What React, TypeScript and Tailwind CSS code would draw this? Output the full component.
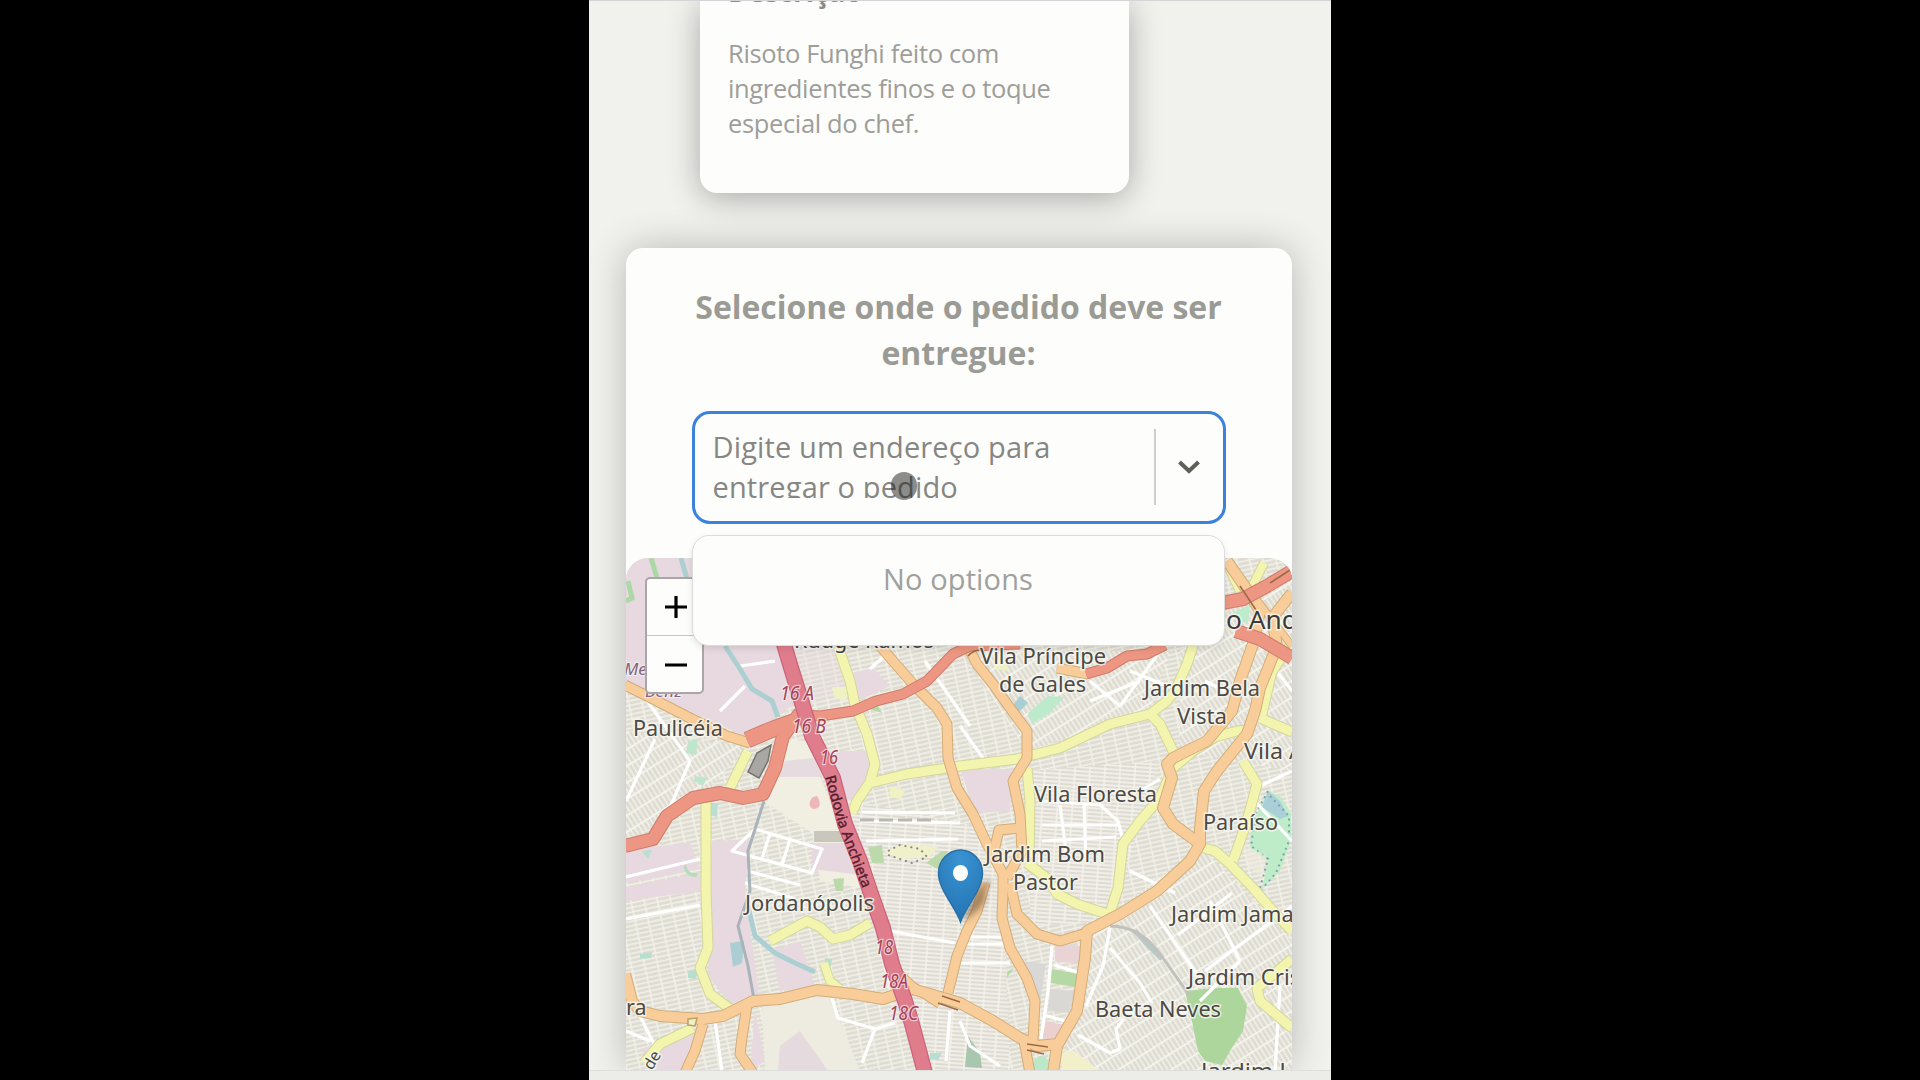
import React from "react";

type Road = { d: string; w?: number };

const yellowRoads: Road[] = [
  { d: "M838 645L850 680L855 704L867 733L875 763L870 781L857 800L852 812" },
  { d: "M870 782L907 773L960 765L1017 758L1060 747L1110 723L1150 713L1160 723L1173 750" },
  { d: "M1150 713L1167 700L1175 690L1187 663L1193 645" },
  { d: "M1250 729L1237 730L1215 736L1193 750L1173 767L1160 797L1140 820L1123 843L1118 887L1110 912" },
  { d: "M1027 862L1047 877L1057 893L1077 903L1107 913" },
  { d: "M1027 767L1030 800L1029 855" },
  { d: "M1260 717L1292 731" },
  { d: "M1243 760L1257 783L1247 820L1233 860" },
  { d: "M1200 846L1215 850L1230 863L1253 887L1273 910L1292 930" },
  { d: "M1292 958L1257 987L1260 1000L1292 1027" },
  { d: "M748 750L730 787" },
  { d: "M706 800L706 890L708 947L700 967L710 993L733 1010" },
  { d: "M770 940L790 929L807 920L820 926L833 938L850 934L870 922" },
  { d: "M644 1062L660 1043L693 1027" },
  { d: "M824 962L830 980L840 988", w: 8 },
  { d: "M1227 563L1240 590M1264 562L1250 590L1234 600", w: 8 },
  { d: "M1292 640L1272 672L1262 715", w: 8 },
];

const orangeRoads: Road[] = [
  { d: "M625 684L653 698L690 717L727 735L750 742" },
  { d: "M880 645L913 683L937 707L947 723L948 757L957 787L973 813L987 843L1003 873L1003 890L1002 917L1010 947L1027 977L1035 1000L1033 1040" },
  { d: "M968 646L977 663L993 683L1010 707L1027 730L1027 757L1013 780L1020 813L1022 850L1007 877" },
  { d: "M1020 827L999 829L994 850" },
  { d: "M1010 882L1017 913L1037 933L1060 940L1087 932" },
  { d: "M985 882L977 910L967 930L957 955L948 992" },
  { d: "M1227 560L1243 583L1260 610L1253 643L1240 680L1232 710L1207 740L1173 757L1167 763L1172 777L1163 807L1173 823L1200 843L1190 860L1157 890L1120 913L1087 930L1085 957L1077 1010L1057 1045L1053 1072", w: 10 },
  { d: "M1292 592L1272 617L1277 645L1260 687L1255 710L1247 733L1217 770L1204 790L1200 827L1200 843", w: 10 },
  { d: "M1245 583L1292 645" , w: 6 },
  { d: "M625 973L632 1000L640 1010L660 1015L703 1018L723 1015L753 1000L780 998L817 989L853 993L883 998L912 988L930 993L960 1002L993 1020L1020 1037L1037 1045L1058 1043", w: 10 },
  { d: "M898 972L912 985L940 1003", w: 8 },
  { d: "M747 1004L742 1037L740 1053L753 1072" },
  { d: "M703 1023L695 1050L685 1072" },
  { d: "M1024 1040L1030 1072" },
  { d: "M1057 667L1088 673" },
];

const redRoads: Road[] = [
  { d: "M625 845L653 838L667 815L693 797L720 792L743 797L763 793L775 767L783 735L800 712", w: 12 },
  { d: "M747 739L773 728L796 720", w: 15 },
  { d: "M805 714L820 715L853 710L876 700L903 693L927 680L953 653L970 645L1020 643", w: 9 },
  { d: "M1086 673L1107 667L1127 655L1147 653L1165 644", w: 9 },
  { d: "M1222 602L1243 598L1267 585L1292 570", w: 12 },
  { d: "M1236 630L1260 638L1292 657", w: 12 },
];

const motorway =
  "M783 640L792 670L802 702L812 735L833 777L845 823L860 860L870 890L883 927L892 963L905 1000L912 1023L925 1072";

const streets = [
  "M626 800L655 738M640 690L690 760L660 830M626 876L700 858M626 918L700 904",
  "M755 828L822 848L812 872L732 850L755 828M770 832L762 858M790 838L782 864M747 870L800 884M745 882L795 898",
  "M860 820L960 822M862 811L955 812M866 840L958 838M890 930L955 942M890 936L890 985",
  "M1042 800L1100 804L1118 820L1126 850M1060 804L1066 850M1084 802L1086 860M1042 824L1118 824M1042 840L1116 836",
  "M1130 870L1175 892M1140 790L1160 778M1150 905L1198 975M1178 934L1232 892M1205 970L1292 905",
  "M1110 927L1103 965L1086 1005M1110 947L1140 982L1152 1002M1078 1034L1110 1052L1120 1048L1116 1028L1124 1018",
  "M1052 945L1048 990L1041 1038M1054 964L1080 972M1044 1014L1072 1022",
  "M832 997L838 1017L875 1028L895 1022M875 1028L862 1062M715 1020L722 1070M950 1010L946 1060M640 1015L655 1045",
  "M960 725L985 760M925 660L970 725M890 650L870 668M1090 680L1120 705L1160 650M1130 670L1180 690",
  "M1260 785L1292 770M1250 795L1292 840M1270 662L1292 690M1205 680L1225 690M1090 700L1140 680",
  "M960 1020L970 1045L1000 1065M1280 985L1275 1070M720 710L745 685M740 665L775 660M626 1030L650 1040",
  "M960 936L1005 936M960 943L1008 943M960 962L1010 962M1200 1000L1240 960M1210 900L1240 960",
];

type Label = { x: number; y: number; w: number; t: string };
const labels: Label[] = [
  { x: 633, y: 735, w: 90, t: "Paulicéia" },
  { x: 980, y: 663, w: 126, t: "Vila Príncipe" },
  { x: 999, y: 691, w: 87, t: "de Gales" },
  { x: 1144, y: 695, w: 116, t: "Jardim Bela" },
  { x: 1177, y: 723, w: 50, t: "Vista" },
  { x: 1244, y: 758, w: 60, t: "Vila A" },
  { x: 1034, y: 801, w: 123, t: "Vila Floresta" },
  { x: 1203, y: 829, w: 75, t: "Paraíso" },
  { x: 985, y: 861, w: 120, t: "Jardim Bom" },
  { x: 1013, y: 889, w: 65, t: "Pastor" },
  { x: 745, y: 910, w: 129, t: "Jordanópolis" },
  { x: 1171, y: 921, w: 151, t: "Jardim Jamaica" },
  { x: 1188, y: 984, w: 152, t: "Jardim Cristina" },
  { x: 1095, y: 1016, w: 126, t: "Baeta Neves" },
  { x: 1201, y: 1078, w: 104, t: "Jardim La" },
];

const exits: Label[] = [
  { x: 780, y: 699, w: 34, t: "16 A" },
  { x: 792, y: 732, w: 34, t: "16 B" },
  { x: 820, y: 763, w: 18, t: "16" },
  { x: 875, y: 953, w: 18, t: "18" },
  { x: 880, y: 987, w: 28, t: "18A" },
  { x: 889, y: 1019, w: 29, t: "18C" },
];

function Roads({ roads, casing, fill }: { roads: Road[]; casing: string; fill: string }) {
  return (
    <g fill="none" strokeLinejoin="round">
      {roads.map((r, i) => (
        <path key={i} d={r.d} stroke={casing} strokeWidth={(r.w ?? 9) + 2} />
      ))}
      {roads.map((r, i) => (
        <path key={i} d={r.d} stroke={fill} strokeWidth={r.w ?? 9} />
      ))}
    </g>
  );
}

function StreetMap() {
  return (
    <svg
      className="block h-[513px] w-[666px]"
      viewBox="626 557 666 513"
      fontFamily="'Noto Sans', 'Open Sans', sans-serif"
    >
      <defs>
        <pattern id="blocks" width="13" height="9" patternUnits="userSpaceOnUse" patternTransform="rotate(-12)">
          <rect width="13" height="9" fill="#dedbd2" />
          <path d="M0 1H13M0 5.5H13" stroke="#f4f3ea" strokeWidth="1.6" />
          <path d="M1 0V9" stroke="#f4f3ea" strokeWidth="1.4" />
        </pattern>
        <pattern id="blocksSteep" width="9" height="14" patternUnits="userSpaceOnUse" patternTransform="rotate(-32)">
          <rect width="9" height="14" fill="#dedbd2" />
          <path d="M1 0V14M5.5 0V14" stroke="#f4f3ea" strokeWidth="1.5" />
          <path d="M0 1H9" stroke="#f6f5ee" strokeWidth="1.8" />
        </pattern>
        <pattern id="blocksFlat" width="15" height="8" patternUnits="userSpaceOnUse" patternTransform="rotate(4)">
          <rect width="15" height="8" fill="#dedbd3" />
          <path d="M0 1H15M0 5H15" stroke="#f6f5ee" strokeWidth="1.6" />
          <path d="M1 0V8" stroke="#f4f3ea" strokeWidth="1.5" />
        </pattern>
        <radialGradient id="pinFill" cx="50%" cy="15%" r="90%">
          <stop offset="0" stopColor="#3a93d2" />
          <stop offset="1" stopColor="#2272b0" />
        </radialGradient>
        <filter id="soft">
          <feGaussianBlur stdDeviation="3" />
        </filter>
      </defs>

      <rect x="626" y="557" width="666" height="513" fill="url(#blocks)" />
      <path d="M855 800L1000 830L1010 1070H920L850 830Z" fill="url(#blocksFlat)" />
      <path d="M1030 770L1160 760L1110 920L1030 925Z" fill="url(#blocksFlat)" />
      <path d="M626 730L745 745L700 800L626 840Z" fill="url(#blocksSteep)" />
      <path d="M960 650L1170 650L1150 710L1027 750Z" fill="url(#blocksSteep)" />
      <path d="M1090 930L1200 845L1292 940V1070H1060Z" fill="url(#blocksSteep)" />
      <path d="M1180 650L1292 557V770L1180 750Z" fill="url(#blocksSteep)" />

      <g fill="#e7d9df">
        <path d="M626 557H775L800 700L745 735L700 715L626 680Z" />
        <path d="M785 645H840L851 690L805 706Z" opacity=".35" />
        <path d="M785 760H815L830 800H778Z" />
        <path d="M826 750H866L872 775L850 800L838 790Z" />
        <path d="M626 848L690 842L700 868L626 882Z" />
        <path d="M626 886L700 872V890L626 900Z" />
        <path d="M712 840L750 838L745 890L760 1000L735 1008L708 975Z" />
        <path d="M960 768H1012L1010 810L975 812Z" />
        <path d="M815 830L845 835L862 878L812 872Z" />
        <path d="M772 950L800 940L815 985L780 990Z" />
        <path d="M780 1042L800 1028L830 1070H778Z" />
        <path d="M640 1048L700 1030L690 1070H660Z" />
        <path d="M755 1010L765 1060L750 1070Z" />
        <path d="M852 672L873 667L890 685L858 700Z" />
      </g>
      <path d="M785 738L806 740L830 800L848 850L868 888L820 880L812 832L763 800Z" fill="#f1efe2" />
      <path d="M785 760L813 757L825 776H778Z" fill="#e6dcdf" />
      <path d="M812 842L850 842L862 874L812 868Z" fill="#e6d8de" />
      <path d="M762 1005L830 995L860 1070H765Z" fill="#eeece0" />
      <path d="M780 1045L800 1030L828 1070H778Z" fill="#e5dadd" />

      <path d="M1055 943L1082 945L1078 963L1055 960Z" fill="#ead3d4" />
      <path d="M1052 968L1078 973L1075 986L1051 982Z" fill="#b5d9a4" />
      <path d="M1050 988L1075 990L1069 1012L1048 1010Z" fill="#d9d8d5" />
      <path d="M1046 1020L1068 1025L1055 1042L1042 1038Z" fill="#ebd0cf" />
      <path d="M1022 960L1046 963L1040 1000Z" fill="#d9d8d6" />
      <path d="M1185 990L1215 987L1238 987L1247 1005L1243 1030L1230 1050L1222 1064L1205 1060L1198 1050L1192 1020Z" fill="#acd69c" />
      <path d="M1268 790L1280 795L1291 812V840L1280 870L1262 888L1268 860L1250 848L1251 825Z" fill="#bfecc8" />
      <path d="M1268 790L1280 800L1288 815L1280 818L1262 806Z" fill="#abcfd9" />
      <path d="M1268 790L1256 812L1251 845L1268 858L1260 887M1270 795L1289 815V840L1276 872L1262 888" fill="none" stroke="#79a7a9" strokeWidth="2" strokeDasharray="2 4" />
      <path d="M1248 845L1266 855L1262 878L1245 862Z" fill="#f0ebe0" opacity=".6" />
      <path d="M1028 712L1048 695L1064 696L1050 712L1032 723Z" fill="#bdeacb" />
      <path d="M1014 703L1020 695L1028 702L1018 712Z" fill="#a9ced4" />
      <path d="M1232 612L1250 604L1248 622L1238 620Z" fill="#bdebcc" />
      <ellipse cx="1041" cy="1064" rx="8" ry="9" fill="#bbe8c6" />
      <path d="M1060 1052L1074 1050L1100 1070H1062Z" fill="#f1f0ca" />
      <path d="M968 1035L980 1052L982 1067L965 1066Z" fill="#a7c7ae" />
      <path d="M884 850L905 843L938 846L930 856L898 858Z" fill="#f0f0cb" />
      <path d="M868 846L882 844L884 862L872 862ZM926 862L942 850L948 850L938 868ZM833 878L844 877L843 890L836 890Z" fill="#bcd9ab" />
      <path d="M888 850L900 844L920 848L927 856L912 862L888 854" fill="none" stroke="#85857e" strokeWidth="1.8" strokeDasharray="2 4" />
      <path d="M814 830H842L845 841H814Z" fill="#c9c6bc" />
      <path d="M817 795C822 803 820 808 813 808C808 806 809 800 813 796Z" fill="#efb6b7" />
      <path d="M688 740L698 738L696 754L686 752ZM695 775L707 777L703 785L694 780Z" fill="#bfe6cd" />
      <path d="M710 802L718 802L717 816L710 814ZM642 850L652 849L648 858Z" fill="#b8dfd0" />
      <path d="M686 864Q688 874 698 872L696 876Q684 876 684 864Z" fill="#b3dcba" />
      <path d="M640 953L652 951L651 957L640 958ZM825 957L832 958L831 966L825 965ZM688 970L698 969L696 978L688 977ZM930 1052L942 1052L938 1059L930 1058Z" fill="#b6dfd1" />
      <path d="M730 942L744 940L742 962L733 966Z" fill="#aaced3" />
      <path d="M863 700L875 700L882 712L870 708ZM1008 970L1014 967L1006 978Z" fill="#b2dba8" />
      <path d="M832 686L848 686L846 700L834 696Z" fill="#f0f2c3" />
      <path d="M890 785L905 790L900 798L890 796ZM1000 650L1010 670L995 668Z" fill="#f0f2c3" />

      <g fill="none" stroke="#ffffff" strokeWidth="3.2" strokeLinejoin="round">
        {streets.map((d, i) => (
          <path key={i} d={d} />
        ))}
      </g>
      <path d="M860 819H932" stroke="#b9b7b1" strokeWidth="3" strokeDasharray="14 5" fill="none" />
      <g fill="none" stroke="#acd0d2" strokeWidth="5" strokeLinejoin="round">
        <path d="M681 557L687 578M725 645L740 668L752 688L772 700L778 716" />
        <path d="M748 905L755 935L775 952L795 962L815 971" />
        <path d="M1135 930L1150 946L1162 958" stroke="#b8c9c6" />
      </g>
      <path d="M764 800L748 850L750 890L738 925L748 965L754 998" fill="none" stroke="#a9b3ba" strokeWidth="3" />
      <path d="M626 600L632 597L628 580M651 557L658 580" fill="none" stroke="#abd8a5" strokeWidth="5" />
      <path d="M1110 925Q1140 925 1160 953L1190 995" fill="none" stroke="#c2c1be" strokeWidth="3" />

      <Roads roads={yellowRoads} casing="#d3d69d" fill="#f3f5ae" />
      <Roads roads={orangeRoads} casing="#d2ad79" fill="#f8cd9a" />
      <Roads roads={redRoads} casing="#cf7c6c" fill="#ec9683" />
      <g fill="none" strokeLinejoin="round">
        <path d={motorway} stroke="#cb6277" strokeWidth="16" />
        <path d={motorway} stroke="#e07d8d" strokeWidth="13.5" />
      </g>
      <path d="M1027 1043L1048 1046M1027 1049L1044 1053M942 995L960 1001M938 1002L958 1009M1240 585L1258 612M1270 582L1290 569M968 655Q975 647 985 650" fill="none" stroke="#9d6b44" strokeWidth="1.6" />
      <path d="M757 752L771 744L768 760L759 777L748 771Z" fill="#a9a7a4" stroke="#77736f" strokeWidth="1.5" />
      <path d="M688 1018L697 1017L695 1025L688 1024Z" fill="#eef0c8" stroke="#bb9f67" strokeWidth="1.5" />

      <path id="anchieta" d="M825 776L838 823L852 860L868 902" fill="none" />
      <text fontSize="14.5" fill="#54202f" stroke="#54202f" strokeWidth=".4">
        <textPath href="#anchieta" textLength="118">Rodovia Anchieta</textPath>
      </text>

      <g fontSize="19" fill="#a14258" fontStyle="italic" stroke="#fbeff0" strokeWidth="2.5" strokeOpacity=".7" paintOrder="stroke">
        {exits.map((l) => (
          <text key={l.t} x={l.x} y={l.y} textLength={l.w} lengthAdjust="spacingAndGlyphs">
            {l.t}
          </text>
        ))}
      </g>
      <g fontSize="21.5" fill="#4c4a46" stroke="#fbfaf2" strokeWidth="3" strokeOpacity=".75" paintOrder="stroke">
        {labels.map((l) => (
          <text key={l.t} x={l.x} y={l.y} textLength={l.w} lengthAdjust="spacingAndGlyphs">
            {l.t}
          </text>
        ))}
        <text x="1226" y="628" fontSize="26" fill="#3d3b39" textLength="97" lengthAdjust="spacingAndGlyphs">o André</text>
        <text x="794" y="647" fontSize="21.5" fill="#45423f" textLength="140">Rudge Ramos</text>
        <text x="626" y="1014" fontSize="21.5">ra</text>
        <text x="652" y="1070" fontSize="16" transform="rotate(-60 652 1070)">de</text>
      </g>
      <g fontSize="17" fill="#7e6480" fontStyle="italic" stroke="#f5eef0" strokeWidth="2" paintOrder="stroke">
        <text x="624" y="674">Mercedes</text>
        <text x="645" y="696" textLength="37">Benz</text>
      </g>

      <path d="M962 918L978 888Q1000 868 985 890Q990 905 962 920Z" fill="#6b5136" opacity=".6" filter="url(#soft)" />
      <path d="M960.500 921C955 905 938.500 889 938.500 872A22 23 0 0 1 982.500 872C982.500 889 966 905 960.500 921Z" fill="url(#pinFill)" stroke="#2a70a8" strokeWidth="1.5" />
      <ellipse cx="960.500" cy="872" rx="7.500" ry="8" fill="#fdfdfb" />
    </svg>
  );
}

function ZoomControl() {
  return (
    <div className="absolute top-[19px] left-[19px] flex w-[59px] flex-col rounded-[5px] border-[2.5px] border-[#aba4a8] bg-[#fdfdfb]">
      <div className="flex h-[57px] items-center justify-center border-b border-[#c6c6c3]">
        <svg className="ml-[3px] h-[22px] w-[22px]" viewBox="0 0 22 22">
          <path d="M0 11H22M11 0V22" stroke="#000" strokeWidth="3.2" />
        </svg>
      </div>
      <div className="flex h-[56px] items-center justify-center">
        <svg className="ml-[3px] h-[22px] w-[22px]" viewBox="0 0 22 22">
          <path d="M0 12H22" stroke="#000" strokeWidth="3.2" />
        </svg>
      </div>
    </div>
  );
}

function AddressSelect() {
  return (
    <div className="relative mx-auto mt-[34.500px] w-[534px]">
      <div className="flex h-[113px] rounded-[18px] border-[3.5px] border-[#3b82dc] bg-[#fdfdfb]">
        <div className="ml-[18px] mt-[13px] h-[71px] w-[420px] overflow-hidden text-[29px] leading-[40px] tracking-[0.14px] text-[#868683]">
          Digite um endereço para
          <br />
          entregar o pedido
        </div>
        <div className="mt-[15px] ml-auto h-[76px] w-[2px] bg-[#cececa]" />
        <div className="flex w-[67px] items-center justify-center">
          <svg className="h-[14px] w-[24px]" viewBox="0 0 24 14">
            <path d="M2.500 2L12 11L21.500 2" fill="none" stroke="#5f5f5a" strokeWidth="4" />
          </svg>
        </div>
      </div>
      <div className="absolute top-[61px] left-[199px] h-[28px] w-[26px] rounded-full bg-[#1c1c1c]/50" />
      <div className="absolute top-[124px] left-0 z-10 flex h-[111px] w-[533px] justify-center rounded-[17px] border border-[#dcdcda] bg-[#fdfdfb] pt-[23px] text-[29px] leading-[40px] tracking-[0.14px] text-[#a0a09d] shadow-[0_3px_6px_rgba(0,0,0,0.1)]">
        No options
      </div>
    </div>
  );
}

export default function App() {
  return (
    <main className="flex h-[1080px] w-[1920px] justify-center overflow-hidden bg-black font-['Open_Sans','Noto_Sans',sans-serif]">
      <div className="flex h-[1080px] w-[742px] flex-col overflow-hidden border-t border-[#d5d5d8] bg-[#f1f1ee]">
        <div className="h-[1069px] overflow-hidden">
          <section className="ml-[111px] flow-root h-[191.500px] w-[429px] rounded-b-[17px] bg-[#fdfdfb] px-[28px] text-[#9d9d9a] shadow-[0_5px_32px_rgba(0,0,0,0.3)]">
            <h2 className="-mt-[28px] h-[63px] text-[27.8px] leading-[37px] font-bold text-[#8b8b88]">Descrição</h2>
            <p className="text-[25.5px] leading-[34.800px] tracking-[-0.36px]">
              Risoto Funghi feito com
              <br />
              ingredientes finos e o toque
              <br />
              especial do chef.
            </p>
          </section>
          <section className="mt-[55px] ml-[36.500px] w-[666px] rounded-[17px] bg-[#fdfdfb] pt-[36.500px] shadow-[0_0_38px_rgba(0,0,0,0.24)]">
            <h1 className="text-center text-[32px] leading-[46px] font-bold tracking-[-0.03px] text-[#9b9b96]">
              Selecione onde o pedido deve ser
              <br />
              entregue:
            </h1>
            <AddressSelect />
            <div className="relative mt-[34px] overflow-hidden rounded-t-[22px]">
              <StreetMap />
              <ZoomControl />
            </div>
          </section>
        </div>
        <div className="h-[10px] shrink-0 border-t border-[#dededc] bg-[#ecece9]" />
      </div>
    </main>
  );
}
